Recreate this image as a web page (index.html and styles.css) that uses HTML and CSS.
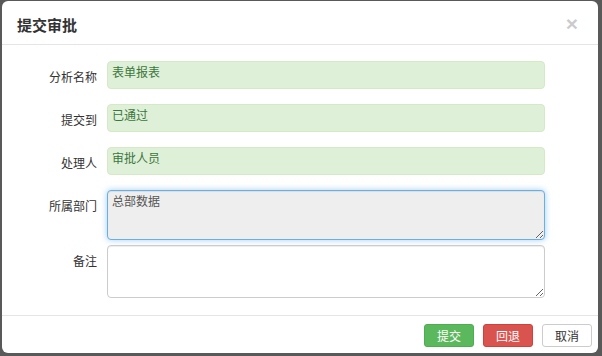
FILE: index.html
```html
<!DOCTYPE html>
<html lang="zh-CN">
<head>
  <meta charset="UTF-8" />
  <title>提交审批</title>
  <link rel="stylesheet" href="styles.css">
</head>
<body>
  <div class="modal">
    <div class="modal-header">
      <h4 class="modal-title">提交审批</h4>
      <span class="close">&times;</span>
    </div>

    <div class="modal-body">
      <div class="form-row">
        <label class="form-label">分析名称</label>
        <input class="form-control is-success" type="text" value="表单报表" readonly />
      </div>
      <div class="form-row">
        <label class="form-label">提交到</label>
        <input class="form-control is-success" type="text" value="已通过" readonly />
      </div>
      <div class="form-row">
        <label class="form-label">处理人</label>
        <input class="form-control is-success" type="text" value="审批人员" readonly />
      </div>
      <div class="form-row tight">
        <label class="form-label">所属部门</label>
        <textarea class="form-control area is-focus" readonly>总部数据</textarea>
      </div>
      <div class="form-row">
        <label class="form-label">备注</label>
        <textarea class="form-control area area-lg"></textarea>
      </div>
    </div>

    <div class="modal-footer">
      <button class="btn btn-success">提交</button>
      <button class="btn btn-danger">回退</button>
      <button class="btn btn-default">取消</button>
    </div>
  </div>
</body>
</html>
```

FILE: styles.css
```css
:root {
  --text: #333;
  --border: #e5e5e5;
  --radius: 4px;
}

body {
  margin: 0;
  background: #595959;
  font-family: "Noto Sans CJK SC", "Liberation Sans", sans-serif;
  font-size: 12px;
  color: var(--text);
}

.modal {
  margin: 1px 0 0 2px;
  width: 596px;
  height: 352px;
  background: #fff;
  border-radius: 6px;
  display: flex;
  flex-direction: column;
}

.modal-header {
  padding: 4px 20px 0 15px;
  box-sizing: border-box;
  height: 44px;
  border-bottom: 1px solid var(--border);
  display: flex;
  align-items: center;
  justify-content: space-between;
}

.modal-title {
  margin: 0;
  font-size: 15px;
  font-weight: bold;
  line-height: 20px;
}

.close {
  font-family: "Liberation Sans", sans-serif;
  font-size: 21px;
  font-weight: bold;
  color: #000;
  opacity: 0.2;
  line-height: 1;
  margin-top: -2px;
}

.modal-body {
  flex: 1;
  padding: 16px 53px 0 0;
}

.form-row {
  display: grid;
  grid-template-columns: 95px 1fr;
  column-gap: 10px;
  margin-bottom: 15px;
}

.form-row.tight {
  margin-bottom: 5px;
}

.form-label {
  text-align: right;
  padding-top: 7px;
  line-height: 18px;
}

.form-control {
  box-sizing: border-box;
  width: 100%;
  height: 28px;
  margin: 0;
  padding: 2px 4px 9px;
  font-family: inherit;
  font-size: 12px;
  line-height: 16px;
  color: #555;
  background: #fff;
  border: 1px solid #ccc;
  border-radius: var(--radius);
  box-shadow: inset 0 1px 1px rgba(0, 0, 0, 0.075);
  outline: none;
}

.form-control.is-success {
  background: #dff0d8;
  border-color: #d6e9c6;
  color: #3c763d;
  box-shadow: none;
}

.area {
  display: block;
  height: 50px;
  padding: 2px 4px;
  resize: vertical;
}

.area-lg {
  height: 53px;
}

.form-control.is-focus {
  background: #eee;
  border-color: #66afe9;
  box-shadow: inset 0 1px 1px rgba(0, 0, 0, 0.075), 0 0 6px rgba(102, 175, 233, 0.6);
}

.modal-footer {
  border-top: 1px solid var(--border);
  padding: 8px 6px 0 0;
  height: 38px;
  box-sizing: border-box;
  display: flex;
  justify-content: flex-end;
  align-items: flex-start;
  gap: 9px;
}

.btn {
  box-sizing: border-box;
  width: 50px;
  height: 23px;
  padding: 0;
  font-family: inherit;
  font-size: 12px;
  line-height: 21px;
  border: 1px solid transparent;
  border-radius: 3px;
  cursor: pointer;
}

.btn-success {
  background: #5cb85c;
  border-color: #4cae4c;
  color: #fff;
}

.btn-danger {
  background: #d9534f;
  border-color: #d43f3a;
  color: #fff;
}

.btn-default {
  background: #fff;
  border-color: #ccc;
  color: var(--text);
}
```
